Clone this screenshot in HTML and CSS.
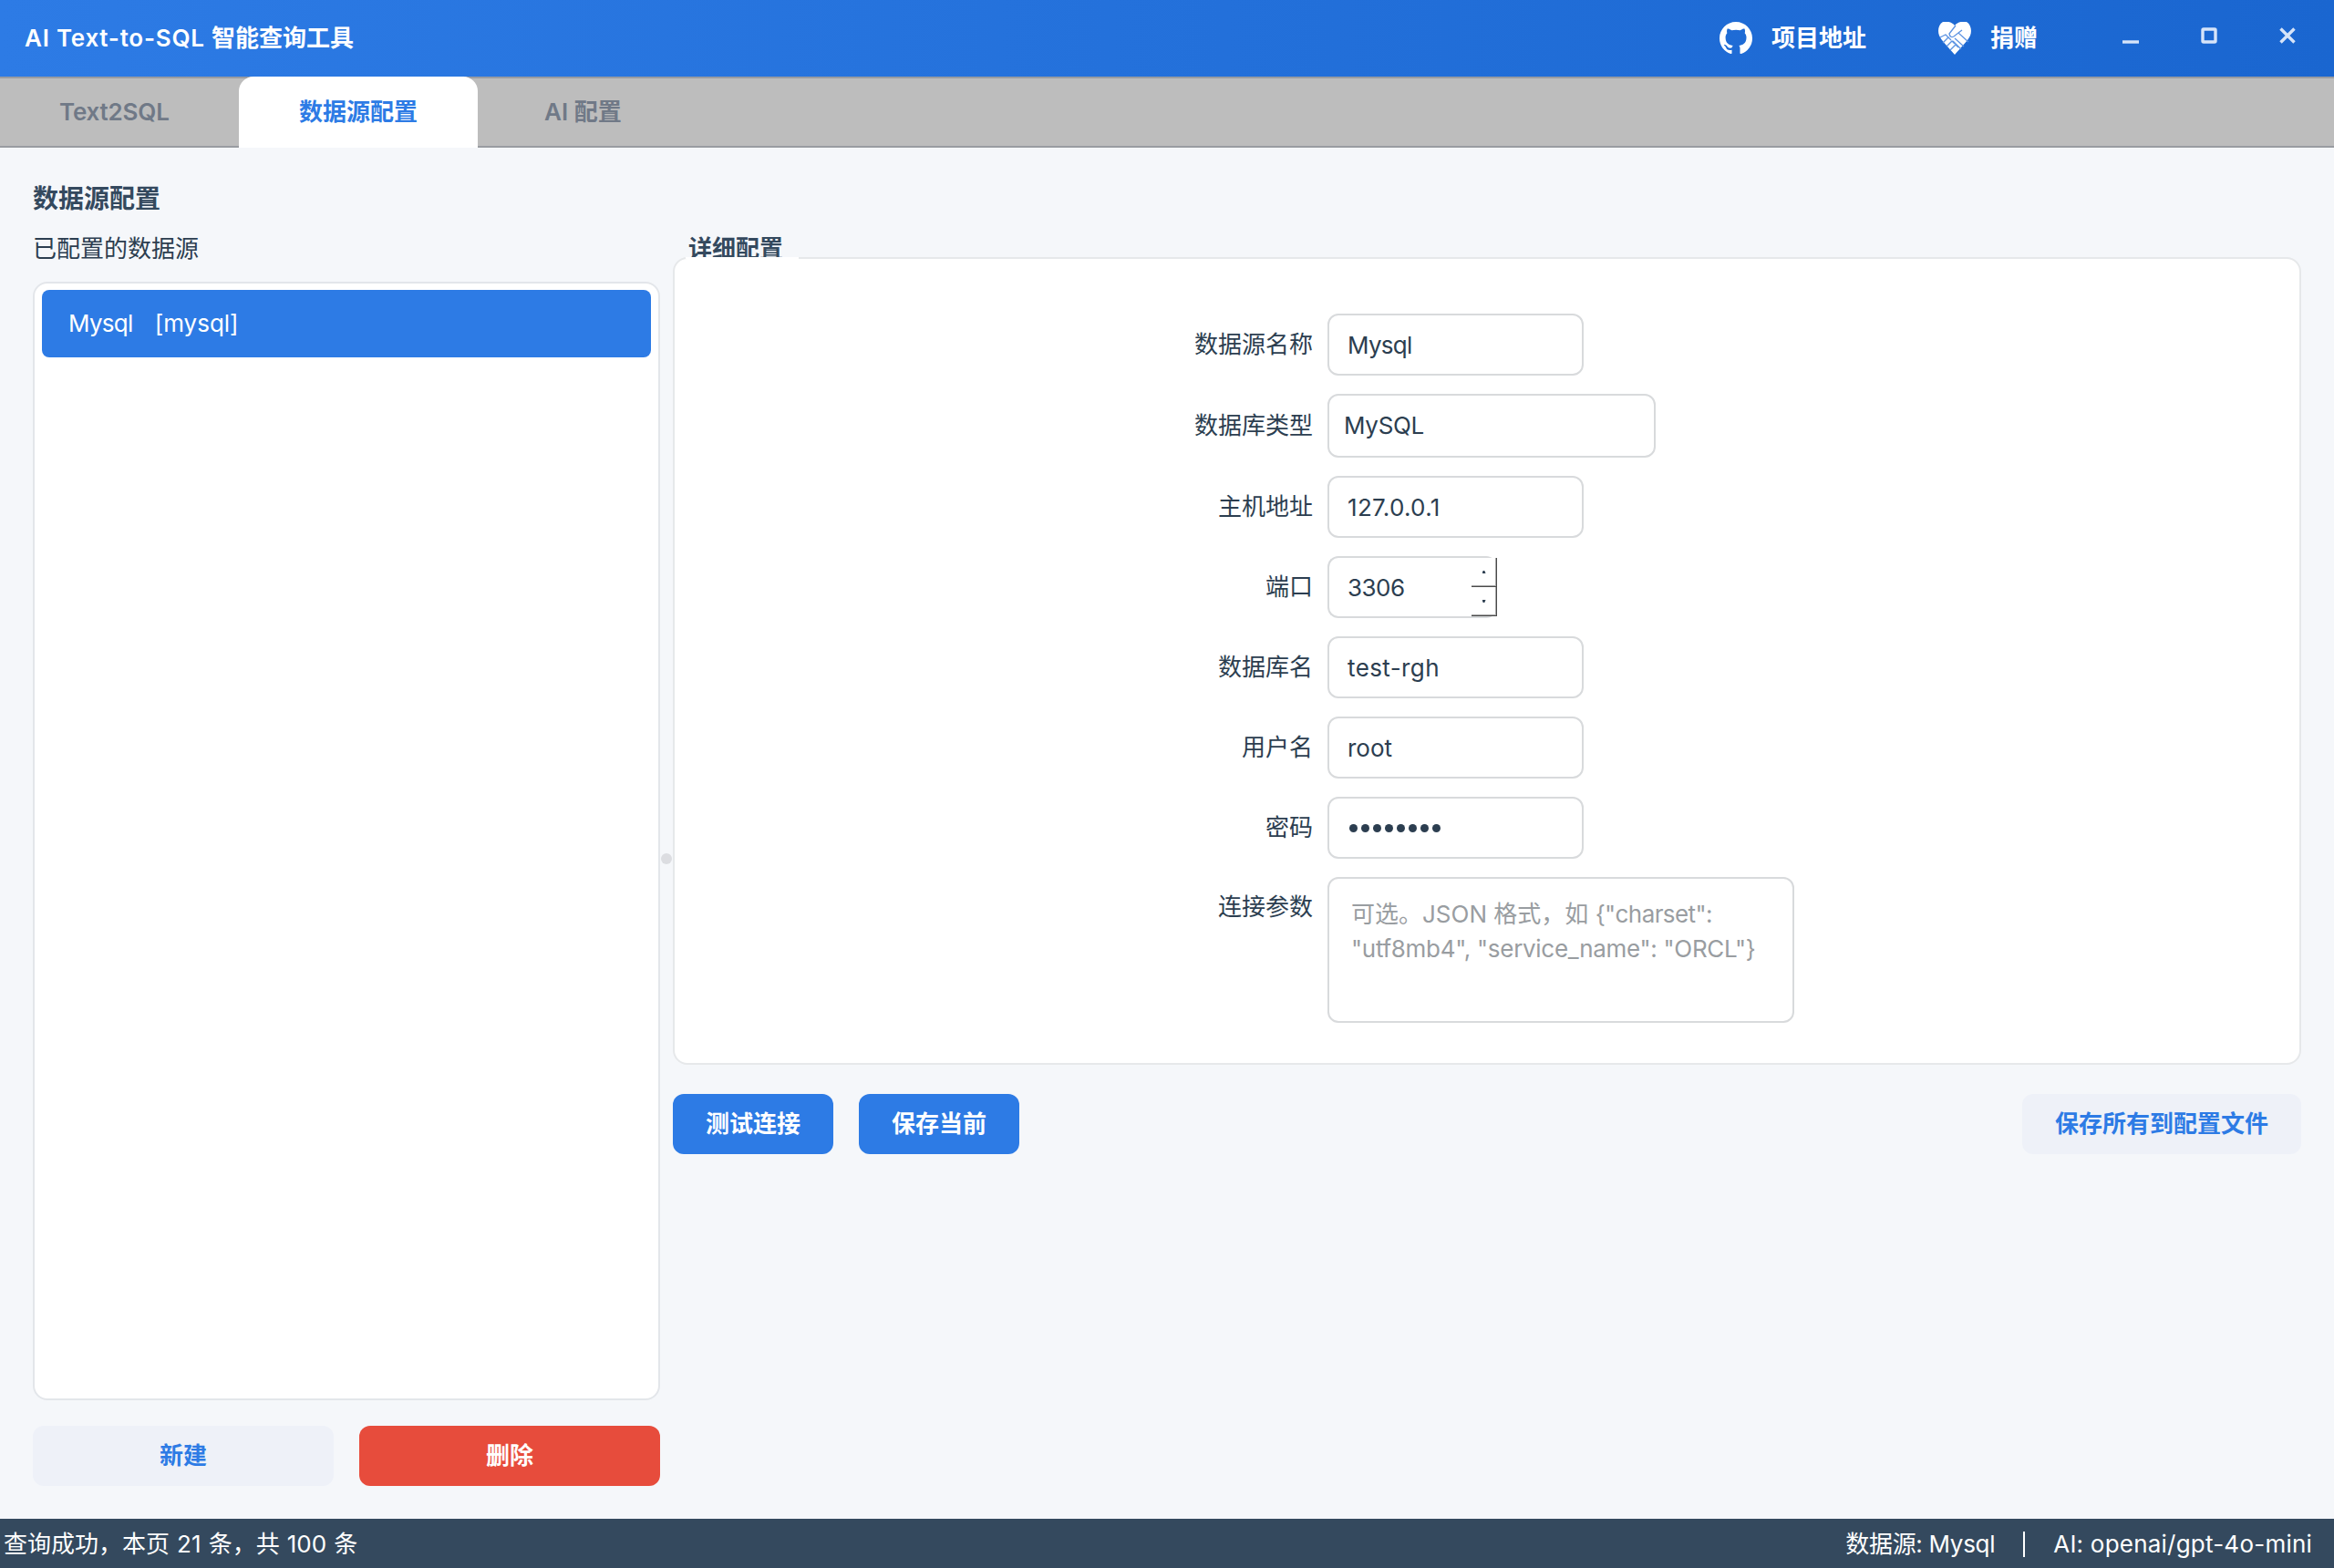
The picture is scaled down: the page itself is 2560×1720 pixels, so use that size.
FILE: index.html
```html
<!DOCTYPE html>
<html lang="zh-CN">
<head>
<meta charset="UTF-8" />
<meta name="viewport" content="width=device-width, initial-scale=1" />
<title>AI Text-to-SQL 智能查询工具</title>
<link rel="stylesheet" href="styles.css">
</head>
<body>

<header class="titlebar">
  <div class="app-title"><span class="app-name">AI Text-to-SQL </span>智能查询工具</div>
  <a class="title-link link-repo">
    <svg class="title-icon" viewBox="0 0 16 16"><path fill="#fff" d="M8 0C3.58 0 0 3.58 0 8c0 3.54 2.29 6.53 5.47 7.59.4.07.55-.17.55-.38 0-.19-.01-.82-.01-1.49-2.01.37-2.53-.49-2.69-.94-.09-.23-.48-.94-.82-1.13-.28-.15-.68-.52-.01-.53.63-.01 1.08.58 1.23.82.72 1.21 1.87.87 2.33.66.07-.52.28-.87.51-1.07-1.78-.2-3.64-.89-3.64-3.95 0-.87.31-1.59.82-2.15-.08-.2-.36-1.02.08-2.12 0 0 .67-.21 2.2.82.64-.18 1.32-.27 2-.27s1.36.09 2 .27c1.53-1.04 2.2-.82 2.2-.82.44 1.1.16 1.92.08 2.12.51.56.82 1.27.82 2.15 0 3.07-1.87 3.75-3.65 3.95.29.25.54.73.54 1.48 0 1.07-.01 1.93-.01 2.2 0 .21.15.46.55.38A8.01 8.01 0 0 0 16 8c0-4.42-3.58-8-8-8z"/></svg>
    <span>项目地址</span>
  </a>
  <a class="title-link link-donate">
    <svg class="title-icon" viewBox="0 0 36 36">
      <path fill="#fff" d="M18 4C15 0 9 -1 5 0C0 3 -1 10 1 15C3 20 12 29 18 36C24 29 33 20 35 15C37 10 36 3 31 0C27 -1 21 0 18 4Z"/>
      <path class="hand-line" d="M19 4L12 13Q13 18 17 16L22 12L33 22M22 12L26 9M2 17L8 14L11 17M5 23L11 17L14 20M9 27L15 21L18 24M13 31L19 25L22 28M18 18L28 27M16 21L25 30"/>
    </svg>
    <span>捐赠</span>
  </a>
  <div class="window-controls">
    <svg viewBox="0 0 18 18"><path d="M0 16H18"/></svg>
    <svg viewBox="0 0 18 18"><rect x="2" y="2" width="14" height="14" rx="1"/></svg>
    <svg viewBox="0 0 18 18"><path d="M1.500 1.500L16.500 16.500M16.500 1.500L1.500 16.500"/></svg>
  </div>
</header>

<nav class="tabs">
  <div class="tab tab-sql">Text2SQL</div>
  <div class="tab active">数据源配置</div>
  <div class="tab tab-ai">AI 配置</div>
</nav>

<main class="content">
  <section class="sidebar">
    <h1>数据源配置</h1>
    <div class="list-label">已配置的数据源</div>
    <div class="source-list">
      <div class="source-item selected"><span class="t-name">Mysql</span><span>[mysql]</span></div>
    </div>
    <div class="list-buttons">
      <button class="btn secondary">新建</button>
      <button class="btn danger">删除</button>
    </div>
  </section>

  <div class="splitter"><div class="handle"></div></div>

  <section class="detail">
    <div class="group-title">详细配置</div>
    <div class="group-box">
      <div class="form">
        <div class="row"><label>数据源名称</label><div class="field"><span class="t-name">Mysql</span></div></div>
        <div class="row combo-row"><label>数据库类型</label><div class="field combo"><span class="t-type">MySQL</span></div></div>
        <div class="row"><label>主机地址</label><div class="field"><span class="t-host">127.0.0.1</span></div></div>
        <div class="row"><label>端口</label>
          <div class="field spin"><span class="t-port">3306</span>
            <div class="spin-buttons"><i class="up"></i><i class="down"></i></div>
          </div>
        </div>
        <div class="row"><label>数据库名</label><div class="field"><span class="t-db">test-rgh</span></div></div>
        <div class="row"><label>用户名</label><div class="field"><span>root</span></div></div>
        <div class="row"><label>密码</label>
          <div class="field password"><i></i><i></i><i></i><i></i><i></i><i></i><i></i><i></i></div>
        </div>
        <div class="row area-row"><label>连接参数</label>
          <div class="field area"><div>可选。JSON 格式，如 <span class="t-json">{"charset":</span></div><div class="t-json2">"utf8mb4", "service_name": "ORCL"}</div></div>
        </div>
      </div>
    </div>
    <div class="actions">
      <button class="btn primary">测试连接</button>
      <button class="btn primary">保存当前</button>
      <button class="btn secondary save-all">保存所有到配置文件</button>
    </div>
  </section>
</main>

<footer class="statusbar">
  <div class="status-left">查询成功，本页 21 条，共 100 条</div>
  <div class="status-right"><span class="s-source">数据源: Mysql</span><span class="s-sep"></span><span class="s-ai">AI: openai/gpt-4o-mini</span></div>
</footer>

</body>
</html>
```
FILE: styles.css
```css
* {
  box-sizing: border-box;
}
body {
  margin: 0;
  width: 2560px;
  height: 1720px;
  display: flex;
  flex-direction: column;
  overflow: hidden;
  background: #f5f7fa;
  color: #2c3e50;
  font-family: Inter, "Noto Sans CJK SC", sans-serif;
  font-size: 26px;
  line-height: 38px;
  white-space: nowrap;
}

/* title bar */
.titlebar {
  height: 84px;
  display: flex;
  align-items: center;
  padding-left: 27px;
  background: linear-gradient(to right, #2d7be5, #1a66d0);
  color: #fff;
  font-weight: 600;
}
.app-title {
  width: 1859px;
}
.app-name {
  letter-spacing: 0.75px;
}
.title-link {
  display: flex;
  align-items: center;
  gap: 21px;
}
.link-repo {
  width: 240px;
}
.link-donate {
  width: 202px;
}
.title-icon {
  width: 36px;
  height: 36px;
}
.hand-line {
  fill: none;
  stroke: #5c93e2;
  stroke-width: 1.3;
}
.window-controls {
  display: flex;
  gap: 68px;
  padding-bottom: 6px;
}
.window-controls svg {
  width: 18px;
  height: 18px;
  fill: none;
  stroke: #d6e4f9;
  stroke-width: 3.4;
}

/* tabs */
.tabs {
  height: 78px;
  display: flex;
  background: #bdbdbd;
  box-shadow: inset 0 2px #999ca1, inset 0 -2px #999ca1;
}
.tab {
  width: 262px;
  line-height: 78px;
  font-weight: 600;
  color: #707987;
}
.tab-sql {
  padding-left: 65px;
  letter-spacing: -0.2px;
}
.tab.active {
  text-align: center;
  background: #fff;
  color: #2d7be5;
  font-weight: 700;
  border-radius: 16px 16px 0 0;
}
.tab-ai {
  padding-left: 73px;
}

/* content */
.content {
  flex: 1;
  display: flex;
  padding: 37px 36px 36px;
}
.sidebar {
  width: 688px;
  display: flex;
  flex-direction: column;
}
h1 {
  margin: 0;
  padding-top: 1px;
  font-size: 28px;
  line-height: 37px;
  font-weight: 700;
  color: #34495e;
}
.list-label {
  height: 72px;
  padding-top: 17px;
}
.source-list {
  flex: 1;
  padding: 7px 8px;
  background: #fff;
  border: 2px solid #e3e6ea;
  border-radius: 16px;
}
.source-item {
  height: 74px;
  padding-left: 29px;
  display: flex;
  align-items: center;
  gap: 24px;
  border-radius: 8px;
  background: #2d7be5;
  color: #fff;
}
.list-buttons {
  display: flex;
  gap: 28px;
  margin-top: 28px;
}
.list-buttons .btn {
  flex: 1;
}
.btn {
  height: 66px;
  padding: 0;
  border: none;
  border-radius: 12px;
  font: inherit;
  font-weight: 600;
}
.primary {
  width: 176px;
  background: #2d7be5;
  color: #fff;
}
.secondary {
  background: #eef1f8;
  color: #2d7be5;
}
.danger {
  background: #e74c3c;
  color: #fff;
}
.splitter {
  width: 14px;
  padding: 737px 0 0 1px;
}
.handle {
  width: 12px;
  height: 12px;
  border-radius: 50%;
  background: #dcdde1;
}

/* detail panel */
.detail {
  flex: 1;
}
.group-title {
  height: 83px;
  padding: 55px 0 0 17px;
  font-weight: 700;
  color: #34495e;
}
.group-box {
  height: 886px;
  padding: 60px 0 0 45px;
  background: #fff;
  border: 2px solid #e6e8ea;
  border-radius: 16px;
  position: relative;
}
/* the title breaks the top border */
.group-box::before {
  content: "";
  position: absolute;
  top: -2px;
  left: 12px;
  width: 124px;
  height: 2px;
  background: #fff;
}
.form {
  display: flex;
  flex-direction: column;
  gap: 20px;
}
.row {
  display: flex;
  height: 68px;
  align-items: center;
}
.row label {
  width: 655px;
  margin-right: 16px;
  padding-bottom: 1px;
  text-align: right;
}
.field {
  width: 281px;
  height: 68px;
  padding: 2px 0 0 20px;
  display: flex;
  align-items: center;
  border: 2px solid #d8dadc;
  border-radius: 12px;
  background: #fff;
}
.combo-row {
  height: 70px;
}
.combo {
  width: 360px;
  height: 70px;
  padding: 0 0 0 16px;
}
.spin {
  width: 186px;
  border-right: none;
  justify-content: space-between;
  padding-top: 0;
}
.t-port {
  padding-top: 2px;
  letter-spacing: -0.5px;
}
.t-name {
  letter-spacing: -0.7px;
}
.t-type {
  letter-spacing: -0.3px;
}
.t-host {
  letter-spacing: 0.3px;
}
.t-db {
  letter-spacing: 0.4px;
}
.t-json {
  letter-spacing: -0.6px;
}
.t-json2 {
  letter-spacing: -0.3px;
}
.spin-buttons {
  width: 28px;
  height: 64px;
  display: flex;
  flex-direction: column;
  background: #fff;
}
.spin-buttons i {
  height: 32px;
  display: flex;
  align-items: center;
  justify-content: center;
  border-right: 1px solid #4a4a4a;
  border-bottom: 1px solid #4a4a4a;
  box-shadow: inset -1px -1px #a5a5a5;
}
.spin-buttons i::after {
  content: "";
  width: 4px;
  height: 3px;
  background: #2c3e50;
}
.spin-buttons .up::after {
  clip-path: polygon(30% 0, 70% 0, 100% 100%, 0 100%);
}
.spin-buttons .down::after {
  clip-path: polygon(0 0, 100% 0, 70% 100%, 30% 100%);
}
.password {
  gap: 4px;
  padding: 0 0 0 22px;
}
.password i {
  width: 9px;
  height: 9px;
  border-radius: 50%;
  background: #2c3e50;
}
.area-row {
  height: 160px;
  align-items: flex-start;
}
.area-row label {
  padding-top: 14px;
}
.area {
  width: 512px;
  height: 160px;
  display: block;
  padding: 20px 0 0 24px;
  color: #999da1;
}
.actions {
  display: flex;
  gap: 28px;
  margin-top: 32px;
}
.save-all {
  width: 306px;
  margin-left: auto;
}

/* status bar */
.statusbar {
  height: 54px;
  display: flex;
  justify-content: space-between;
  align-items: center;
  padding: 2px 24px 0 4px;
  background: #34495e;
  color: #fff;
}
.status-left {
  word-spacing: 0.8px;
}
.status-right {
  display: flex;
  align-items: center;
}
.s-source {
  letter-spacing: -0.3px;
}
.s-sep {
  width: 2px;
  height: 28px;
  margin: 0 31px;
  background: #fff;
}
.s-ai {
  letter-spacing: 0.22px;
}
```
